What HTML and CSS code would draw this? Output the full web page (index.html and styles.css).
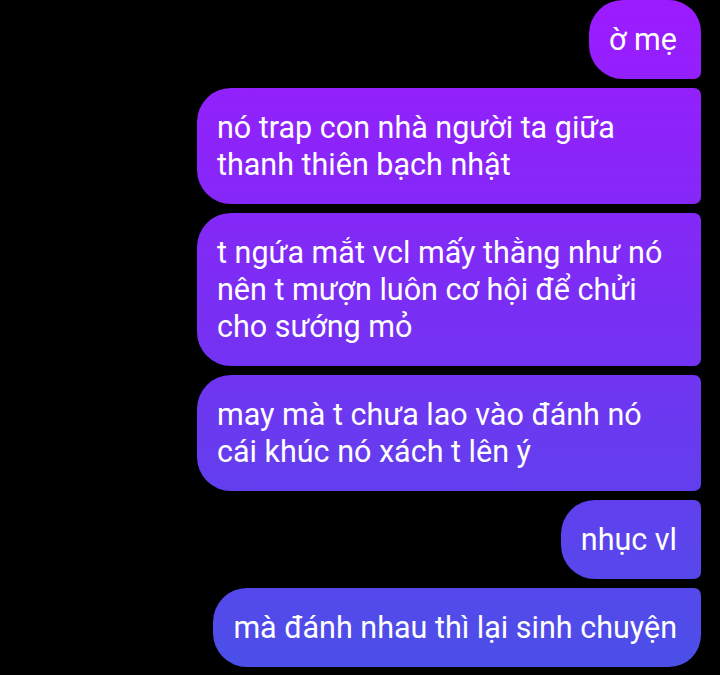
FILE: index.html
```html
<!DOCTYPE html>
<html lang="vi">
<head>
    <meta charset="UTF-8">
    <meta name="viewport" content="width=device-width, initial-scale=1.0">
    <title>Tin nhắn</title>
    <link rel="stylesheet" href="styles.css">
</head>
<body>

<div id="thread">
    <div class="bubble first">ờ mẹ</div>
    <div class="bubble">nó trap con nhà người ta giữa thanh thiên bạch nhật</div>
    <div class="bubble">t ngứa mắt vcl mấy thằng như nó nên t mượn luôn cơ hội để chửi cho sướng mỏ</div>
    <div class="bubble">may mà t chưa lao vào đánh nó cái khúc nó xách t lên ý</div>
    <div class="bubble">nhục vl</div>
    <div class="bubble last">mà đánh nhau thì lại sinh chuyện</div>
</div>

</body>
</html>
```

FILE: styles.css
```css
body {
    margin: 0;
    background-color: #000;
    font-family: 'Roboto', 'Noto Sans', sans-serif;
}
#thread {
    display: flex;
    flex-direction: column;
    align-items: flex-end;
    gap: 9px;
    padding-right: 19px;
}
.bubble {
    max-width: 504px;
    box-sizing: border-box;
    padding: 21px 24px 21px 20px;
    font-size: 30.5px;
    line-height: 37px;
    color: #fff;
    border-radius: 34px 7px 7px 34px;
    background: linear-gradient(to bottom, #9c1bff 0%, #7a2ef4 45%, #4a50e8 100%);
    background-attachment: fixed;
}
.bubble.first {
    border-top-right-radius: 32px;
}
.bubble.last {
    border-bottom-right-radius: 32px;
}
```
